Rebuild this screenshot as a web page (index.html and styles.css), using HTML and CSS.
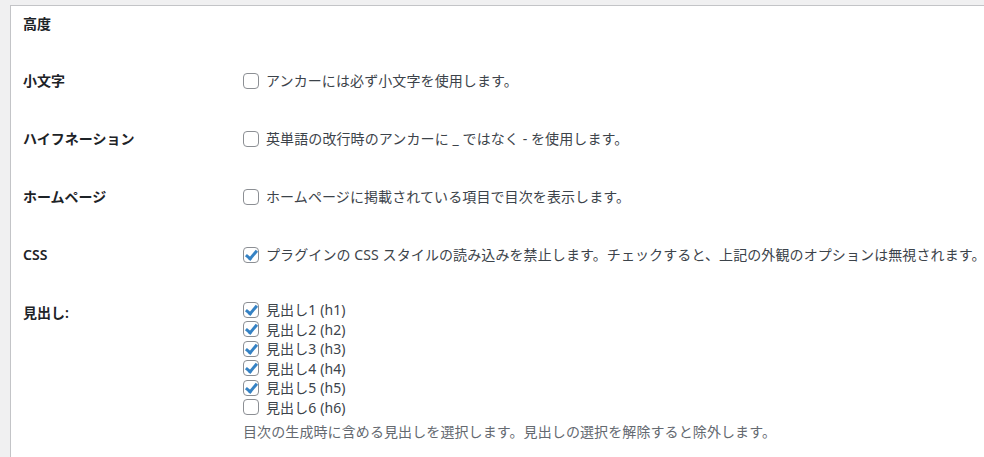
FILE: index.html
```html
<!DOCTYPE html>
<html lang="ja">
<head>
  <meta charset="UTF-8" />
  <meta name="viewport" content="width=device-width, initial-scale=1.0"/>
  <title>目次設定 - 高度</title>
  <link rel="stylesheet" href="styles.css">
</head>
<body>
  <div class="panel">
    <h3 class="section-title">高度</h3>

    <!-- Advanced options -->
    <div class="form-table">
      <div class="row">
        <div class="label">小文字</div>
        <div class="field">
          <label class="check"><input type="checkbox"> アンカーには必ず小文字を使用します。</label>
        </div>
      </div>

      <div class="row">
        <div class="label">ハイフネーション</div>
        <div class="field">
          <label class="check"><input type="checkbox"> 英単語の改行時のアンカーに _ ではなく - を使用します。</label>
        </div>
      </div>

      <div class="row">
        <div class="label">ホームページ</div>
        <div class="field">
          <label class="check"><input type="checkbox"> ホームページに掲載されている項目で目次を表示します。</label>
        </div>
      </div>

      <div class="row">
        <div class="label">CSS</div>
        <div class="field">
          <label class="check"><input type="checkbox" checked> プラグインの CSS スタイルの読み込みを禁止します。チェックすると、上記の外観のオプションは無視されます。</label>
        </div>
      </div>

      <div class="row">
        <div class="label">見出し:</div>
        <div class="field field-list">
          <label class="check list-item"><input type="checkbox" checked> 見出し1 (h1)</label>
          <label class="check list-item"><input type="checkbox" checked> 見出し2 (h2)</label>
          <label class="check list-item"><input type="checkbox" checked> 見出し3 (h3)</label>
          <label class="check list-item"><input type="checkbox" checked> 見出し4 (h4)</label>
          <label class="check list-item"><input type="checkbox" checked> 見出し5 (h5)</label>
          <label class="check list-item"><input type="checkbox"> 見出し6 (h6)</label>
          <p class="description">目次の生成時に含める見出しを選択します。見出しの選択を解除すると除外します。</p>
        </div>
      </div>
    </div>
  </div>
</body>
</html>
```

FILE: styles.css
```css
body {
  margin: 0;
  height: 457px;
  background: #f0f0f1;
  font-family: "Noto Sans", "Noto Sans CJK JP", sans-serif;
  font-size: 14px;
  color: #3c434a;
  overflow: hidden;
}

.panel {
  margin: 5px 0 0 10px;
  padding: 0 0 0 12px;
  height: 451px;
  background: #fff;
  border-top: 1px solid #c3c4c7;
  border-left: 1px solid #c3c4c7;
}

.section-title {
  margin: 0;
  padding: 9px 0 19px;
  font-size: 14px;
  line-height: 18px;
  font-weight: 600;
  color: #1d2327;
}

.row {
  display: grid;
  grid-template-columns: 220px 1fr;
}

.label {
  padding: 20px 0;
  line-height: 18px;
  font-weight: 600;
  color: #1d2327;
}

.field {
  padding: 19px 0;
  line-height: 20px;
  white-space: nowrap;
  letter-spacing: 0.1px;
}

.field-list {
  padding: 16px 0 0;
  display: flex;
  flex-direction: column;
}

.check {
  display: flex;
  align-items: center;
  gap: 7px;
}

.list-item {
  height: 19.5px;
  line-height: 19.5px;
}

.check input {
  appearance: none;
  -webkit-appearance: none;
  margin: 0;
  width: 16px;
  height: 16px;
  border: 1px solid #8c8f94;
  border-radius: 4px;
  background: #fff;
  position: relative;
  flex: none;
}

.check input:checked::before {
  content: '';
  position: absolute;
  left: 4px;
  top: 0px;
  width: 4px;
  height: 9px;
  border-right: 3px solid #3582c4;
  border-bottom: 3px solid #3582c4;
  transform: rotate(40deg);
}

.description {
  margin: 5px 0 0;
  line-height: 20px;
  color: #646970;
}
```
